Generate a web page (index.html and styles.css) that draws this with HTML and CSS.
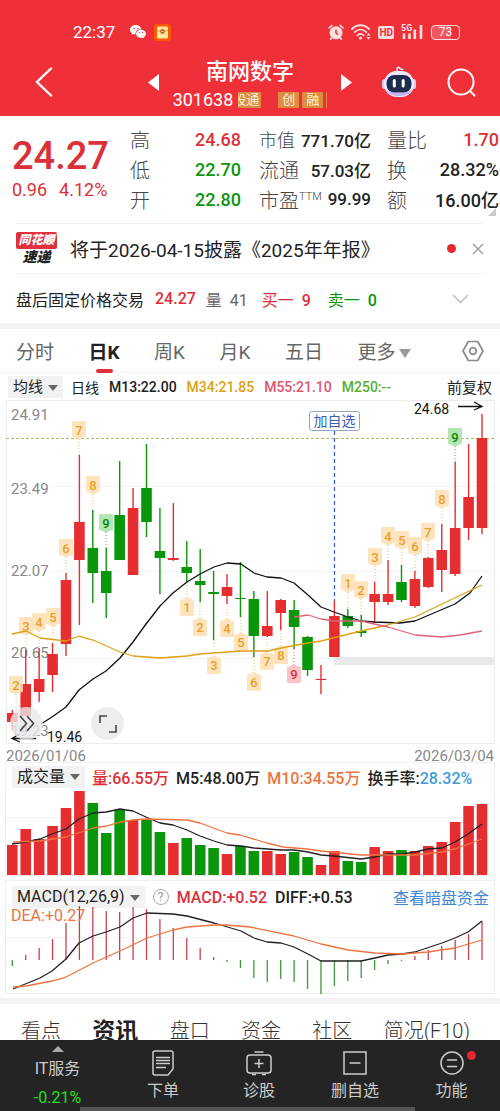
FILE: index.html
```
<!DOCTYPE html>
<html lang="zh-CN">
<head>
    <meta charset="UTF-8">
    <meta name="viewport" content="width=device-width, initial-scale=1.0">
    <title>南网数字 301638</title>
    <link rel="stylesheet" href="styles.css">
</head>
<body>
    <header class="top">
        <div class="status">
            <span class="clock">22:37</span>
            <svg class="wechat" width="16" height="14" viewBox="0 0 16 14">
                <path fill="#fff" d="M6 0C2.700 0 0 2.100 0 4.800c0 1.500.8 2.800 2.100 3.700L1.600 10l1.900-.9c.7.2 1.300.3 2 .3C5 6.300 7.500 4 11.200 3.900 10.600 1.600 8.500 0 6 0z"/>
                <path fill="#fff" d="M11 4.700c-2.700 0-4.900 1.800-4.900 4.100s2.200 4.100 4.900 4.100c.6 0 1.100-.1 1.600-.2l1.600.8-.4-1.400c1.300-.8 2.100-1.900 2.100-3.300 0-2.300-2.200-4.100-4.900-4.100z"/>
                <g fill="#ef3038"><circle cx="4" cy="3.500" r=".8"/><circle cx="7.800" cy="3.500" r=".8"/><circle cx="9.400" cy="7.600" r=".7"/><circle cx="12.600" cy="7.600" r=".7"/></g>
            </svg>
            <svg width="17" height="17" viewBox="0 0 17 17">
                <rect width="17" height="17" rx="3" fill="#fb5a05"/>
                <rect x="3" y="2.500" width="11" height="12" rx="1.500" fill="#ffe9a0"/>
                <path d="M3 6c3 2 8 2 11 0" fill="none" stroke="#e8973a"/>
                <circle cx="8.500" cy="7.500" r="2.400" fill="#c8642a"/>
                <path d="M7.500 7.500h2" stroke="#ffe9a0"/>
            </svg>
            <div class="status-right">
                <svg width="16" height="16" viewBox="0 0 16 16">
                    <circle cx="8" cy="8.800" r="6.500" fill="#ffdfe0"/>
                    <path d="M1 4l3-2.600M15 4l-3-2.600M3.500 14l-1 1.500M12.500 14l1 1.500" stroke="#ffdfe0" stroke-width="1.500" stroke-linecap="round"/>
                    <path d="M8 5.500V9l2 1.600" fill="none" stroke="#ef3038" stroke-width="1.500"/>
                </svg>
                <svg width="20" height="16" viewBox="0 0 20 16">
                    <g fill="none" stroke="#ffdfe0" stroke-width="1.800" stroke-linecap="round">
                        <path d="M1 5c5-5 12-5 17 0M3.700 8.200c3.500-3.400 8-3.400 11.600 0M6.400 11.300c2-1.900 4.200-1.900 6.200 0"/>
                    </g>
                    <circle cx="9.500" cy="14" r="1.600" fill="#ffdfe0"/>
                    <path d="M17.500 9l2 2.600h-4zM17.500 15.500l2-2.600h-4z" fill="#ffdfe0"/>
                </svg>
                <span class="hd">HD</span>
                <svg width="23" height="16" viewBox="0 0 23 16">
                    <text x="0" y="7" class="net">5G</text>
                    <path d="M3 9.500V15M8.500 9.500V15M13.800 5.500V15M20 1V15" stroke="#ffdfe0" stroke-width="2.600"/>
                </svg>
                <span class="battery">73</span>
            </div>
        </div>
        <div class="nav">
            <button class="icon-btn" aria-label="返回">
                <svg width="18" height="30" viewBox="0 0 18 30"><path d="M16 1.500L2 15l14 13.500" fill="none" stroke="#fff" stroke-width="2.400" stroke-linecap="round"/></svg>
            </button>
            <div class="switcher">
                <button class="icon-btn" aria-label="上一只"><svg width="11" height="17" viewBox="0 0 11 17"><path d="M11 0v17L0 8.500z" fill="#fff"/></svg></button>
                <div class="stock">
                    <h1>南网数字</h1>
                    <div class="code">
                        <span>301638</span>
                        <div class="marks">
                            <span class="mark first"><i>股通</i></span>
                            <span class="mark">创</span>
                            <span class="mark">融</span>
                            <span class="mark cut"></span>
                        </div>
                    </div>
                </div>
                <button class="icon-btn" aria-label="下一只"><svg width="11" height="17" viewBox="0 0 11 17"><path d="M0 0v17l11-8.500z" fill="#fff"/></svg></button>
            </div>
            <div class="nav-right">
                <button class="icon-btn" aria-label="智能助手">
                    <svg width="34" height="32" viewBox="0 0 34 32">
                        <path d="M15 6V2.500c1-1.500 2.500-1.500 3 0 1 1 2.500 1.300 3 .3" fill="none" stroke="#e9dcff" stroke-width="1.600"/>
                        <rect x="0" y="13" width="5" height="10" rx="2.500" fill="#d5c8f7"/>
                        <rect x="29" y="13" width="5" height="10" rx="2.500" fill="#d5c8f7"/>
                        <rect x="2" y="5" width="30" height="26" rx="12.500" fill="#efe8ff"/>
                        <path d="M4 24c4 8 22 8 26 0-6 4-20 4-26 0z" fill="#c7b6f3"/>
                        <rect x="4.500" y="9" width="25" height="17.500" rx="8" fill="#1d2b4f"/>
                        <path d="M12.300 14.500v5.500M21.200 14.500v5.500" stroke="#fff" stroke-width="3" stroke-linecap="round"/>
                    </svg>
                </button>
                <button class="icon-btn" aria-label="搜索">
                    <svg width="29" height="29" viewBox="0 0 29 29"><g fill="none" stroke="#fff" stroke-width="2"><circle cx="14" cy="14" r="12.500"/><path d="M23 23l4.500 4.500" stroke-linecap="round"/></g></svg>
                </button>
            </div>
        </div>
    </header>

    <main class="page">
        <section class="quote">
            <div class="price up">
                <div class="last">24.27</div>
                <div class="change"><span>0.96</span><span>4.12%</span></div>
            </div>
            <dl class="stats col-a">
                <div><dt>高</dt><dd class="up">24.68</dd></div>
                <div><dt>低</dt><dd class="down">22.70</dd></div>
                <div><dt>开</dt><dd class="down">22.80</dd></div>
            </dl>
            <dl class="stats col-b">
                <div><dt>市值</dt><dd>771.70亿</dd></div>
                <div><dt>流通</dt><dd>57.03亿</dd></div>
                <div><dt>市盈<sup>TTM</sup></dt><dd>99.99</dd></div>
            </dl>
            <dl class="stats col-c">
                <div><dt>量比</dt><dd class="up">1.70</dd></div>
                <div><dt>换</dt><dd>28.32%</dd></div>
                <div><dt>额</dt><dd>16.00亿</dd></div>
            </dl>
            <span class="corner"></span>
        </section>

        <section class="notice">
            <div class="brand"><b>同花顺</b><em>速递</em></div>
            <a href="#" class="headline">将于2026-04-15披露《2025年年报》</a>
            <span class="dot"></span>
            <button class="icon-btn" aria-label="关闭"><svg width="12" height="12" viewBox="0 0 12 12"><path d="M1 1l10 10M11 1L1 11" stroke="#999" stroke-width="1.300"/></svg></button>
        </section>

        <section class="after">
            <span>盘后固定价格交易</span>
            <b class="up deal">24.27</b>
            <span class="vol">量 &nbsp;41</span>
            <span class="up bid">买一 <b>&nbsp;9</b></span>
            <span class="down">卖一 <b>&nbsp;0</b></span>
            <button class="icon-btn" aria-label="展开"><svg width="17" height="10" viewBox="0 0 17 10"><path d="M1 1l7.500 7.500L16 1" fill="none" stroke="#bbb" stroke-width="1.400"/></svg></button>
        </section>

        <nav class="periods">
            <button>分时</button>
            <button class="active">日K</button>
            <button>周K</button>
            <button>月K</button>
            <button>五日</button>
            <button class="more">更多<span class="arrow"></span></button>
            <button class="setting" aria-label="设置">
                <svg width="22" height="22" viewBox="0 0 22 22"><g fill="none" stroke="#8a8a8a" stroke-width="1.700"><path d="M6.300 1.500h9.400L21 11l-5.300 9.500H6.300L1 11z" stroke-linejoin="round"/><circle cx="11" cy="11" r="3.300"/></g></svg>
            </button>
        </nav>

        <section class="kline">
            <div class="legend ma">
                <button class="picker">均线<span class="arrow"></span></button>
                <span>日线</span>
                <b>M13:22.00</b>
                <b class="c-yellow">M34:21.85</b>
                <b class="c-pink">M55:21.10</b>
                <b class="c-green">M250:--</b>
                <button class="adjust">前复权</button>
            </div>
            <div class="plot">
                <svg id="kChart" class="chart" viewBox="0 400 500 344"></svg>
                <button class="float forward" aria-label="前进"><svg width="16" height="17" viewBox="0 0 16 17"><path d="M1 1l6.500 7.500L1 16M8 1l6.500 7.500L8 16" fill="none" stroke="#444" stroke-width="1.600"/></svg></button>
                <button class="float full" aria-label="全屏"><svg width="18" height="18" viewBox="0 0 18 18"><path d="M1 8V1h7M17 10v7h-7" fill="none" stroke="#444" stroke-width="1.600"/></svg></button>
            </div>
            <div class="dates"><span>2026/01/06</span><span>2026/03/04</span></div>
        </section>

        <section class="panel volume">
            <div class="legend">
                <button class="picker">成交量<span class="arrow"></span></button>
                <b class="up">量:66.55万</b>
                <b>M5:48.00万</b>
                <b class="c-orange">M10:34.55万</b>
                <b>换手率:<span class="c-blue">28.32%</span></b>
            </div>
            <svg id="volChart" class="chart" viewBox="0 790 500 86"></svg>
        </section>

        <section class="panel macd">
            <div class="legend">
                <button class="picker">MACD(12,26,9)<span class="arrow"></span></button>
                <span class="help">?</span>
                <b class="up">MACD:+0.52</b>
                <b>DIFF:+0.53</b>
                <a href="#" class="funds">查看暗盘资金</a>
            </div>
            <svg id="macdChart" class="chart" viewBox="0 906 500 88"></svg>
        </section>

        <nav class="info-tabs">
            <a href="#">看点</a>
            <a href="#" class="active">资讯</a>
            <a href="#">盘口</a>
            <a href="#">资金</a>
            <a href="#">社区</a>
            <a href="#">简况(F10)</a>
        </nav>
    </main>

    <footer class="bottom">
        <div class="actions">
            <button class="sector"><span class="caret"></span><span class="name">IT服务</span><span class="pct">-0.21%</span></button>
            <button>
                <svg width="24" height="26" viewBox="0 0 24 26"><g fill="none" stroke="#ccc" stroke-width="1.500"><path d="M4 1h16q2 0 2 2v16l-5 6H4q-2 0-2-2V3q0-2 2-2z"/><path d="M5 7.500h14M5 10.500h14M5 13.500h14M5 17.500h10" stroke-width="1.300"/></g></svg>
                下单
            </button>
            <button>
                <svg width="28" height="26" viewBox="0 0 28 26"><g fill="none" stroke="#ccc" stroke-width="1.500"><path d="M9.500 2h9"/><rect x="2" y="5" width="24" height="18" rx="3"/><path d="M14 9v9M9.500 13.500h9M7 24.500h4M17 24.500h4"/></g></svg>
                诊股
            </button>
            <button>
                <svg width="24" height="26" viewBox="0 0 24 26"><g fill="none" stroke="#ccc" stroke-width="1.500"><rect x="1" y="2" width="22" height="22"/><path d="M6.500 13h11"/></g></svg>
                删自选
            </button>
            <button class="func">
                <svg width="24" height="26" viewBox="0 0 24 26"><g fill="none" stroke="#ccc" stroke-width="1.500"><circle cx="12" cy="13" r="11"/><path d="M7 10h10M7 16.500h10"/></g></svg>
                功能
                <span class="badge"></span>
            </button>
        </div>
        <div class="strip"></div>
    </footer>
    <script src="chart.js"></script>
</body>
</html>
```
FILE: styles.css
```
* {
    box-sizing: border-box;
}
body {
    margin: 0;
    height: 100vh;
    display: flex;
    flex-direction: column;
    font-family: Roboto, "Noto Sans CJK SC", sans-serif;
    color: #222;
    background: #fff;
    white-space: nowrap;
}
button {
    font: inherit;
    color: inherit;
    background: none;
    border: 0;
    padding: 0;
    cursor: pointer;
}
a {
    color: inherit;
    text-decoration: none;
}
b {
    font-weight: 500;
}
svg {
    display: block;
}
.up { color: #dc3038; }
.down { color: #0a960a; }
.c-yellow { color: #dfa012; }
.c-pink { color: #e0566f; }
.c-green { color: #57b030; }
.c-orange { color: #ec7440; }
.c-blue { color: #3e9bd8; }

/* header */
.top {
    flex: none;
    background: #ef3038;
    color: #fff;
    padding-top: 22px;
}
.status {
    display: flex;
    align-items: center;
    height: 20px;
    padding: 0 40px 0 73px;
}
.clock {
    font-size: 17px;
    margin-right: 15px;
}
.wechat {
    margin-right: 8px;
}
.status-right {
    display: flex;
    align-items: center;
    gap: 7px;
    margin-left: auto;
}
.hd {
    background: #ffdfe0;
    color: #ef3038;
    font-size: 10px;
    font-weight: 700;
    line-height: 13px;
    border-radius: 2px;
    padding: 0 1px;
}
.net {
    font-size: 9px;
    font-weight: 700;
    fill: #ffdfe0;
}
.battery {
    width: 29px;
    height: 15px;
    border: 1px solid #ffdfe0;
    border-radius: 4px;
    color: #fff;
    font-size: 12px;
    line-height: 13px;
    text-align: center;
    background: linear-gradient(90deg, #f4575e 72%, transparent 72%);
}
.nav {
    display: grid;
    grid-template-columns: 1fr 204px 124px;
    align-items: center;
    height: 74px;
    padding: 6px 24px 0 35px;
}
.switcher, .nav-right {
    display: flex;
    align-items: center;
    justify-content: space-between;
}
.nav-right {
    padding-left: 30px;
}
.stock {
    text-align: center;
    padding-top: 5px;
}
h1 {
    margin: 0;
    font-size: 22px;
    font-weight: 500;
    line-height: 30px;
}
.code {
    display: flex;
    align-items: center;
    gap: 5px;
    font-size: 18px;
    line-height: 26px;
}
.marks {
    display: flex;
    gap: 3px;
}
.mark {
    background: #dc8d42;
    color: #fff3df;
    font-size: 13px;
    line-height: 16px;
    width: 21px;
    border-radius: 1px;
}
.mark.first {
    display: flex;
    justify-content: flex-end;
    overflow: hidden;
    width: 23px;
    padding-right: 2px;
    margin-right: 14px;
}
.mark i {
    font-style: normal;
}
.mark.cut {
    width: 1px;
}

/* main */
.page {
    flex: 1;
    min-height: 0;
    overflow-y: auto;
    scrollbar-width: none;
}
.quote {
    position: relative;
    display: grid;
    grid-template-columns: 118px 111px 130px 1fr;
    padding: 8px 1px 0 12px;
    height: 107px;
}
.last {
    font-size: 38px;
    font-weight: 500;
    line-height: 40px;
    padding-top: 12px;
}
.change {
    display: flex;
    gap: 12px;
    font-size: 18px;
    line-height: 28px;
}
.stats {
    margin: 0;
}
.stats div {
    display: flex;
    justify-content: space-between;
    align-items: center;
    height: 30px;
}
.stats dt {
    font-size: 20px;
    font-weight: 300;
    color: #444;
}
.stats dd {
    margin: 0;
    font-size: 18px;
    font-weight: 500;
}
.col-b div:first-child dt {
    font-size: 18px;
}
.col-b dd {
    font-size: 17px;
}
.col-b {
    margin: 0 0 0 18px;
}
.col-c {
    margin: 0 0 0 16px;
}
.stats sup {
    font-size: 11px;
    line-height: 0;
}
.corner {
    position: absolute;
    right: 4px;
    bottom: 7px;
    border: 4px solid #ccc;
    border-top-color: transparent;
    border-left-color: transparent;
}
.notice, .after {
    display: flex;
    align-items: center;
    height: 50px;
    margin: 0 16px;
    border-top: 1px solid #f1f1f1;
}
.brand {
    display: flex;
    flex-direction: column;
    align-items: center;
    width: 41px;
    margin-right: 13px;
    font-size: 12px;
    line-height: 17px;
    font-weight: 900;
    font-style: italic;
}
.brand b {
    align-self: stretch;
    font-weight: 900;
    text-align: center;
    color: #fff;
    background: #e0313a;
    border-radius: 2px;
}
.brand em {
    font-size: 14px;
}
.headline {
    font-size: 19px;
}
.dot {
    width: 9px;
    height: 9px;
    border-radius: 50%;
    background: #e8262e;
    margin: 0 16px 0 auto;
}
.after {
    font-size: 16px;
    gap: 6px;
}
.after .deal {
    margin-left: 5px;
}
.after .vol {
    color: #666;
    margin-left: 4px;
}
.after .bid {
    margin: 0 11px 0 8px;
}
.after .icon-btn {
    margin: 0 15px 0 auto;
}

/* period tabs */
.periods {
    display: flex;
    justify-content: space-between;
    height: 50px;
    padding: 0 16px;
    border-top: 6px solid #f3f3f3;
    border-bottom: 1px solid #f3f3f3;
    font-size: 19px;
    color: #666;
}
.periods button {
    position: relative;
}
.periods .active {
    color: #222;
    font-weight: 700;
}
.periods .active::after {
    content: "";
    position: absolute;
    left: 7px;
    right: 7px;
    bottom: -1px;
    height: 4px;
    border-radius: 2px;
    background: #e0313a;
}
.arrow {
    display: inline-block;
    border: 5px solid transparent;
    border-top: 6px solid #666;
    border-bottom: 0;
    margin-left: 5px;
    vertical-align: middle;
}
.more .arrow {
    border-width: 9px 6px 0;
    border-top-color: #999;
    margin-left: 4px;
}
.more {
    margin-right: 16px;
}

/* charts */
.legend {
    display: flex;
    align-items: center;
    gap: 7px;
    height: 28px;
    padding: 0 6px;
    font-size: 16px;
}
.legend.ma {
    font-size: 14px;
    gap: 10px;
    height: 27px;
    padding: 0 8px;
}
.picker {
    background: #f2f2f2;
    line-height: 22px;
    padding: 0 5px;
}
.ma .picker {
    margin-right: -2px;
    font-size: 15px;
}
.ma .adjust {
    font-size: 15px;
    margin-left: auto;
}
.plot {
    position: relative;
}
.chart {
    width: 100%;
    height: auto;
    overflow: visible;
}
.chart .axis {
    font-size: 15px;
    fill: #888;
}
.chart .note {
    font-size: 14px;
    fill: #111;
}
.chart .tag {
    font-size: 13px;
    font-weight: 500;
    text-anchor: middle;
}
.chart .fav {
    font-size: 14px;
    fill: #3a5fb8;
    text-anchor: middle;
}
.chart .dea {
    font-size: 16px;
    fill: #ec7440;
}
.float {
    position: absolute;
    bottom: 4px;
    width: 33px;
    height: 33px;
    border-radius: 50%;
    background: rgba(232, 232, 236, 0.8);
    display: flex;
    align-items: center;
    justify-content: center;
}
.forward { left: 10px; }
.full { left: 91px; }
.dates {
    display: flex;
    justify-content: space-between;
    padding: 0 6px;
    font-size: 15px;
    line-height: 24px;
    height: 18px;
    color: #888;
}
.panel .legend {
    margin: 0 5px;
    border: 1px solid #f0f0f0;
    border-bottom: 0;
    padding-right: 5px;
}
.volume .chart {
    margin-bottom: 4px;
}
.macd .legend {
    gap: 8px;
    height: 26px;
    padding-top: 7px;
}
.macd .chart {
    margin-bottom: 4px;
}
.help {
    width: 16px;
    height: 16px;
    flex: none;
    border: 1px solid #aaa;
    border-radius: 50%;
    color: #999;
    font-size: 12px;
    line-height: 14px;
    text-align: center;
}
.funds {
    margin-left: auto;
    color: #3c86d8;
}

/* info tabs */
.info-tabs {
    display: flex;
    align-items: center;
    justify-content: space-between;
    height: 56px;
    padding: 0 30px 0 21px;
    border-top: 6px solid #f3f3f5;
    font-size: 20px;
    font-weight: 300;
    color: #333;
}
.info-tabs .active {
    font-size: 23px;
    font-weight: 700;
    color: #222;
}

/* bottom bar */
.bottom {
    flex: none;
    background: #242424;
    color: #ccc;
}
.actions {
    display: grid;
    grid-template-columns: 115fr 96fr 96fr 96fr 97fr;
    height: 67px;
}
.actions button {
    position: relative;
    display: flex;
    flex-direction: column;
    align-items: center;
    gap: 3px;
    padding-top: 10px;
    font-size: 16px;
    line-height: 24px;
}
.actions .sector {
    padding-top: 6px;
    gap: 5px;
}
.caret {
    border: 6px solid transparent;
    border-top: 0;
    border-bottom: 6px solid #aaa;
}
.pct {
    color: #1fe01f;
}
.badge {
    position: absolute;
    left: calc(50% + 15px);
    top: 11px;
    width: 9px;
    height: 9px;
    border-radius: 50%;
    background: #e8262e;
}
.strip {
    height: 4px;
    width: 67%;
    margin-left: 16%;
    background: #555;
}
```
FILE: chart.js
```
const RED = '#e62e30';
const GREEN = '#0a960a';
const STEP = 13.42;
const x = i => 12.3 + i * STEP;

// [up, high, bodyTop, bodyBottom, low, volumeTop, macdEnd]
const days = [
    [1, 710, 713, 722, 730, 845, 966], [1, 650, 684, 716, 716, 829, 955],
    [1, 648, 679, 692, 702, 839, 948], [1, 643, 654, 675, 692, 826, 939],
    [1, 573, 580, 644, 656, 808, 923], [1, 455, 522, 560, 625, 791, 906],
    [0, 510, 548, 573, 603, 803, 907], [0, 548, 571, 593, 618, 833, 911],
    [0, 461, 515, 560, 560, 810, 912], [1, 488, 508, 575, 575, 820, 907],
    [0, 444, 488, 522, 537, 820, 909], [0, 508, 551, 558, 594, 832, 919],
    [1, 503, 558, 560, 561, 843, 928], [0, 541, 567, 573, 582, 838, 938],
    [0, 549, 581, 585, 602, 845, 948], [0, 571, 592, 594, 640, 848, 957],
    [1, 574, 587, 596, 604, 854, 962], [0, 562, 598, 599, 617, 846, 968],
    [0, 591, 599, 636, 657, 851, 978], [1, 591, 626, 636, 637, 851, 982],
    [1, 599, 600, 613, 630, 854, 979], [0, 600, 610, 627, 649, 852, 982],
    [0, 636, 637, 670, 676, 857, 989], [1, 665, 679, 680, 694, 865, 994],
    [1, 601, 616, 657, 657, 851, 986], [0, 609, 616, 626, 628, 861, 981],
    [0, 615, 631, 633, 637, 862, 978], [1, 582, 594, 602, 623, 847, 970],
    [1, 560, 594, 602, 605, 851, 964], [0, 565, 582, 600, 602, 850, 961],
    [1, 571, 579, 606, 608, 851, 956], [1, 557, 558, 587, 588, 846, 950],
    [1, 524, 550, 570, 592, 842, 946], [1, 462, 528, 574, 576, 822, 940],
    [1, 444, 497, 528, 540, 806, 934], [1, 414, 438, 528, 534, 804, 921]
];

// [x, y, number, kind]
const tags = [
    [16, 685, 2], [26, 626, 3], [39, 622, 4], [53, 617, 5], [66, 548, 6], [79, 430, 7], [93, 485, 8], [106, 523, 9, 'g'],
    [187, 607, 1], [200, 627, 2], [214, 665, 3], [227, 628, 4], [241, 642, 5], [254, 682, 6], [267, 661, 7], [281, 655, 8], [294, 674, 9, 'r'],
    [348, 583, 1], [361, 590, 2], [375, 557, 3], [388, 536, 4], [402, 540, 5], [415, 546, 6], [428, 532, 7], [442, 499, 8], [455, 437, 9, 'g']
];
const tagColors = {
    o: ['#fde0b4', '#e8a02a'],
    g: ['#a5e3a8', '#0a860a'],
    r: ['#fbb9bf', '#d8303a']
};

function line(points, color, width) {
    return `<polyline points="${points}" fill="none" stroke="${color}" stroke-width="${width || 1.3}" stroke-linejoin="round"/>`;
}
function path(d, color, extra) {
    return `<path d="${d}" fill="none" stroke="${color}" ${extra || ''}/>`;
}
function text(tx, ty, cls, str, extra) {
    return `<text x="${tx}" y="${ty}" class="${cls}" ${extra || ''}>${str}</text>`;
}

function drawK() {
    let s = path('M6 400.5H494.5V743.5H6.500V400', '#ececec');
    s += path('M52 486.500H494M52 571.500H494M52 658.500H494', '#f3f3f3');
    s += text(11, 420, 'axis', '24.91') + text(11, 494, 'axis', '23.49') + text(11, 576, 'axis', '22.07');
    s += text(11, 658, 'axis', '20.65') + text(11, 736, 'axis', '19.23');
    s += '<rect x="334" y="657" width="160" height="8" fill="#e9e9e9"/>';
    s += path('M6 438.500H494', '#b5b86a', 'stroke-dasharray="3 2"');
    tags.forEach(([tx, ty, n, kind]) => {
        const d = days[Math.round((tx - 12.3) / STEP)];
        const end = ty < d[1] ? d[1] : d[4];
        s += path(`M${tx} ${ty}V${end}`, tagColors[kind || 'o'][1], 'stroke-dasharray="1 2" opacity="0.7"');
    });
    days.forEach(([up, high, top, bottom, low], i) => {
        const c = up ? RED : GREEN;
        s += path(`M${x(i)} ${high}V${low}`, c, 'stroke-width="1.4"');
        s += `<rect x="${x(i) - 5.3}" y="${top}" width="10.6" height="${bottom - top}" fill="${c}"/>`;
    });
    tags.forEach(([tx, ty, n, kind]) => {
        const [bg, fg] = tagColors[kind || 'o'];
        const above = ty < days[Math.round((tx - 12.3) / STEP)][1];
        const tip = above
            ? `M${tx - 6} ${ty - 8}h12v14l-3 1l-3 2l-3 -2l-3 -1z`
            : `M${tx - 6} ${ty + 8}h12v-14l-3 -1l-3 -2l-3 2l-3 1z`;
        s += `<path d="${tip}" fill="${bg}" stroke="${bg}" stroke-width="2" stroke-linejoin="round" opacity="0.85"/>`;
        s += text(tx, ty + 5, 'tag', n, `fill="${fg}"`);
    });
    s += line('41,724 52,717 66,707 79,690 93,679 106,671 120,658 133,642 146,624 160,606 173,593 187,582 200,574 214,567 227,563 241,564 254,573 267,577 281,578 294,583 308,595 321,607 334,612 348,617 361,621 374,622 400,623 415,621 455,604 470,593 482,576', '#111');
    s += line('12,634 26,631 40,638 66,641 79,636 93,640 120,652 133,656 160,658 187,656 200,654 227,652 241,651 268,651 281,648 308,643 321,641 361,631 388,625 415,617 442,604 482,585', '#dfa012');
    s += line('294,617 308,615 321,619 334,621 361,621 388,627 415,635 442,637 460,635 482,631', '#e0607a');
    s += path('M334.500 431V601', '#3f5fc0', 'stroke-dasharray="4 3" stroke-width="1.3"');
    s += '<rect x="309.5" y="411.5" width="50" height="19" rx="2" fill="#fff" stroke="#90a5c8"/>';
    s += text(334.5, 426, 'fav', '加自选');
    s += text(414, 414, 'note', '24.68') + path('M458 406.500H481M474 402L482 406.500L474 410', '#111', 'stroke-width="1.3"');
    s += text(47, 742, 'note', '19.46') + path('M36 738.500H13M20 734L12 738.500L20 742', '#111', 'stroke-width="1.3"');
    document.getElementById('kChart').innerHTML = s;
}

function drawVolume() {
    let s = path('M5.500 790V875.500H494.500V790', '#ececec') + path('M6 817.500H494', '#f3f3f3');
    days.forEach((d, i) => {
        s += `<rect x="${x(i) - 5.3}" y="${d[5]}" width="10.6" height="${875 - d[5]}" fill="${d[0] ? RED : GREEN}"/>`;
    });
    s += line('12,844 26,842 40,839 52,834 66,829 79,819 93,813 106,812 120,809 133,811 146,817 160,823 173,825 187,830 200,836 214,841 227,845 241,846 254,848 281,850 294,850 308,852 321,855 334,856 361,859 375,857 388,854 402,854 415,852 428,849 442,848 455,842 468,834 482,824', '#222');
    s += line('13,842 40,841 66,837 93,828 106,826 120,822 133,820 147,819 187,820 200,823 227,833 240,835 267,843 283,847 307,849 321,851 361,855 415,855 442,852 455,849 482,839', '#ec7440');
    document.getElementById('volChart').innerHTML = s;
}

function drawMacd() {
    let s = path('M5.500 906V993.500H494.500V906', '#ececec') + path('M6 937.500H494', '#f3f3f3');
    days.forEach((d, i) => {
        s += path(`M${x(i)} 960V${d[6]}`, d[6] < 960 ? '#c8404c' : '#3c9a3c', 'stroke-width="1.3"');
    });
    s += text(11, 921, 'dea', 'DEA:+0.27');
    s += line('13,989 40,978 52,971 66,959 79,943 93,936 106,932 120,927 133,918 147,913 173,914 187,916 214,923 241,931 254,938 267,942 281,943 294,947 308,954 321,961 361,961 375,958 388,955 402,954 415,952 442,943 455,938 468,932 482,921', '#222');
    s += line('13,987 26,986 52,981 66,977 93,963 120,951 147,938 173,930 187,927 214,925 227,925 250,927 294,936 321,944 348,950 375,953 402,954 428,952 455,948 482,940', '#ec7440');
    document.getElementById('macdChart').innerHTML = s;
}

drawK();
drawVolume();
drawMacd();
```
